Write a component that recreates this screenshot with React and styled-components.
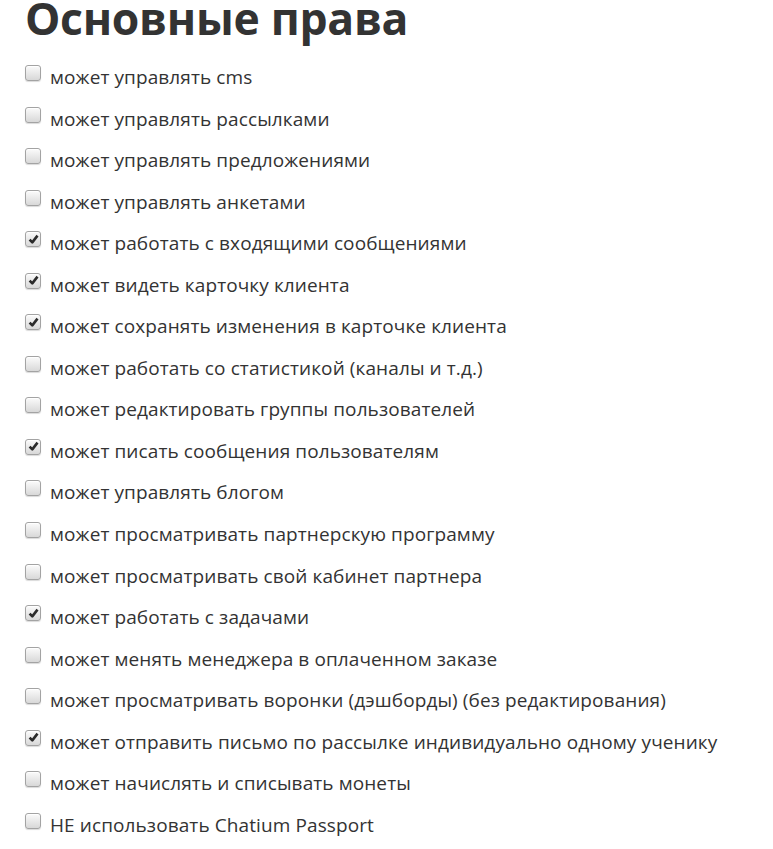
import React from "react"
import styled, { createGlobalStyle } from "styled-components"

const rights = [
  ["может управлять cms", false],
  ["может управлять рассылками", false],
  ["может управлять предложениями", false],
  ["может управлять анкетами", false],
  ["может работать с входящими сообщениями", true],
  ["может видеть карточку клиента", true],
  ["может сохранять изменения в карточке клиента", true],
  ["может работать со статистикой (каналы и т.д.)", false],
  ["может редактировать группы пользователей", false],
  ["может писать сообщения пользователям", true],
  ["может управлять блогом", false],
  ["может просматривать партнерскую программу", false],
  ["может просматривать свой кабинет партнера", false],
  ["может работать с задачами", true],
  ["может менять менеджера в оплаченном заказе", false],
  ["может просматривать воронки (дэшборды) (без редактирования)", false],
  ["может отправить письмо по рассылке индивидуально одному ученику", true],
  ["может начислять и списывать монеты", false],
  ["НЕ использовать Chatium Passport", false],
]

function Check({ checked }) {
  return (
    <Box>
      {checked && (
        <svg width="11" height="11" viewBox="0 0 11 11">
          <path d="M1.6 5.6 L4.3 8.4 L9.5 1.6" fill="none" stroke="#2b2b2b" strokeWidth="2.6" strokeLinejoin="round" />
        </svg>
      )}
    </Box>
  )
}

export default function App() {
  return (
    <>
      <GlobalStyle />
      <Page>
        <Title>Основные права</Title>
        <List>
          {rights.map(([label, checked]) => (
            <Row key={label}>
              <Check checked={checked} />
              <Label>{label}</Label>
            </Row>
          ))}
        </List>
      </Page>
    </>
  )
}

const GlobalStyle = createGlobalStyle`
  body {
    margin: 0;
    background: #fff;
    font-family: "Open Sans", "Liberation Sans", sans-serif;
    color: #333;
  }
`

const Page = styled.div`
  padding-left: 25px;
  overflow: hidden;
  height: 849px;
`

const Title = styled.h1`
  margin: -14px 0 0;
  font-size: 44.5px;
  font-weight: 700;
  line-height: 64px;
  color: #333;
  letter-spacing: -0.3px;
`

const List = styled.div`
  display: flex;
  flex-direction: column;
  margin-top: 14px;
`

const Row = styled.div`
  display: flex;
  align-items: flex-start;
  height: 41.55px;
`

const Box = styled.span`
  width: 14px;
  height: 14px;
  margin-top: 1px;
  flex: none;
  border: 1px solid #a3a3a3;
  border-radius: 3px;
  background: linear-gradient(#fbfbfb, #d8d8d8);
  box-shadow: inset 0 1px 0 #fff, 0 1px 1px rgba(0, 0, 0, 0.15);
  display: flex;
  align-items: center;
  justify-content: center;
`

const Label = styled.span`
  margin-left: 9px;
  font-size: 19px;
  line-height: 26px;
  letter-spacing: 0.1px;
  color: #333;
`
